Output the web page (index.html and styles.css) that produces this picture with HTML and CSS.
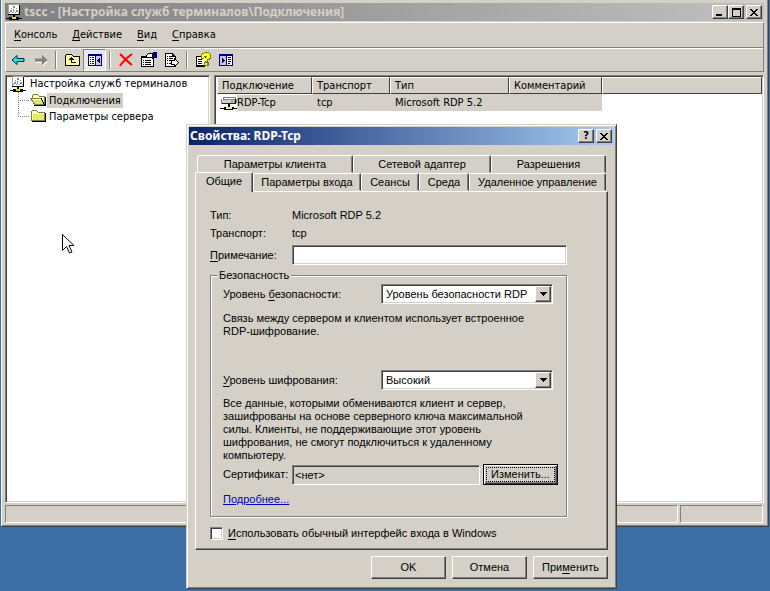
FILE: index.html
```html
<!DOCTYPE html>
<html lang="ru">
<head>
<meta charset="utf-8">
<title>tscc - [Настройка служб терминалов\Подключения]</title>
<link rel="stylesheet" href="styles.css">
</head>
<body>
<svg class="defs" aria-hidden="true">
  <symbol id="i-console" viewBox="0 0 16 16" shape-rendering="crispEdges">
    <path fill="#a0a0a0" d="M2 0h12v11H2z"/><path fill="#fff" d="M3 1h10v9H3z"/>
    <path fill="#000" d="M13 1h1v10H2v-1h11zM7 11h2v2H7zM0 14h3v-1h10v1h3v1h-3v1H3v-1H0z"/>
    <path fill="#8a8a8a" d="M7 2h2v2H7zM5 4h1v1H5zM10 4h1v1h-1zM4 6h2v2H4zM7 5h1v3H7zM10 6h2v2h-2zM3 8h1v1H3zM6 8h1v1H6zM9 8h1v1H9zM12 8h1v1h-1z"/>
    <path fill="#e6e300" d="M6 13h4v2H6z"/>
  </symbol>
  <symbol id="i-folder" viewBox="0 0 16 16" shape-rendering="crispEdges">
    <path fill="#808040" d="M1 3h1V2h5v1h1v1h7v9H1z"/><path fill="#ffffb0" d="M2 3h5v1h1v1h6v1H2z"/>
    <path fill="#e9e76a" d="M2 6h12v6H2z"/><path fill="#fffd9a" d="M2 6h1v6H2z"/><path fill="#000" d="M15 5h1v9H2v-1h13z"/>
  </symbol>
  <symbol id="i-open" viewBox="0 0 16 16" shape-rendering="crispEdges">
    <path fill="#808040" d="M2 3h1V2h5v1h1v1h6v9H4L0 6h2z"/><path fill="#ffffb0" d="M3 3h5v1h1v1h5v1H3z"/>
    <path fill="#e4e268" d="M2 7h9l3 5H5z"/><path fill="#fff" d="M2 7h9v1H3zM12 6h2v4h-1z"/><path fill="#000" d="M15 5h1v9H4v-1h11zM11 6h1v2h1v2h1v2h1v1h-1v-1h-1v-2h-1V8h-1z"/>
  </symbol>
  <symbol id="i-rdp" viewBox="0 0 17 16" shape-rendering="crispEdges">
    <path fill="#808080" d="M3 2h13v2h1v4h-1v1H1V4h2z"/><path fill="#fff" d="M4 3h11v1H3v1H2v-1h2z"/>
    <path fill="#d4d0c8" d="M2 5h12v3H2z"/><path fill="#222" d="M15 4h1v5H2V8h13z"/><path fill="#00d000" d="M11 6h2v1h-2z"/>
    <path fill="#000" d="M8 9h2v3h4v1h3v1h-4v1H4v-1H0v-1h4v-1h4z"/><path fill="#e6e6a0" d="M6 12h6v2H6z"/>
  </symbol>
  <symbol id="i-back" viewBox="0 0 14 14"><path fill="#23e2e2" stroke="#002f3b" d="M1 7l5-4.500v3h7v3H6v3z"/></symbol>
  <symbol id="i-fwd" viewBox="0 0 14 14"><path fill="#fff" d="M14 8l-5 5v-3H2V9z"/><path fill="#808080" d="M13.500 7L8 2v3.500H1v3h7V12z"/></symbol>
  <symbol id="i-up" viewBox="0 0 16 16" shape-rendering="crispEdges">
    <path fill="#000" d="M1 3h1V2h6v1h1v1h7v10H1z"/><path fill="#ffff9c" d="M2 3h6v1h1v1h6v8H2z"/>
    <path fill="#000" d="M7 5h1v1h1v1h1v1H8v2h4v1H7V8H5V7h1V6h1z"/>
  </symbol>
  <symbol id="i-tree" viewBox="0 0 14 14" shape-rendering="crispEdges">
    <path fill="#000080" d="M0 1h14v12H0z"/><path fill="#fff" d="M1 3h6v9H1zM8 3h5v9H8z"/>
    <path fill="#000080" d="M2 4h1v1H2zM4 4h2v1H4zM2 6h1v1H2zM4 6h2v1H4zM2 8h1v1H2zM4 8h2v1H4zM2 10h1v1H2zM4 10h2v1H4z"/><path fill="#c6c3ff" d="M8 3h5v9H8z"/>
    <path fill="#000" d="M11 5h1v5h-1V9h-1V8H9V7h1V6h1z"/>
  </symbol>
  <symbol id="i-pane" viewBox="0 0 14 14" shape-rendering="crispEdges">
    <path fill="#000080" d="M0 1h14v12H0z"/><path fill="#c6c3ff" d="M1 3h6v9H1z"/><path fill="#fff" d="M8 3h5v9H8z"/>
    <path fill="#000080" d="M9 4h3v1H9zM9 6h3v1H9zM9 8h3v1H9zM9 10h2v1H9z"/><path fill="#000" d="M3 5h1v1h1v1h1v1H5v1H4v1H3z"/>
  </symbol>
  <symbol id="i-del" viewBox="0 0 14 14"><path fill="none" stroke="#f00" stroke-width="2" d="M1 1c3 3 8 8 12 11M13 1C9 4 4 8 1 13"/></symbol>
  <symbol id="i-prop" viewBox="0 0 16 16" shape-rendering="crispEdges">
    <path fill="#000" d="M0 4h13v11H0z"/><path fill="#fff" d="M1 6h11v8H1z"/>
    <path fill="#000" d="M2 8h1v1H2zM4 8h6v1H4zM2 10h1v1H2zM4 10h6v1H4zM2 12h1v1H2zM4 12h6v1H4z"/>
    <path fill="#000" d="M4 4l3-3h6v6h-2L9 5 7 6H5z"/><path fill="#fff" d="M5 4l3-2h3v3H8L6 5z"/><path fill="#000080" d="M12 0h4v6h-3z"/>
  </symbol>
  <symbol id="i-export" viewBox="0 0 16 16" shape-rendering="crispEdges">
    <path fill="#000" d="M1 1h8v1h1v1h1v1h1v11H1z"/><path fill="#fff" d="M2 2h6v3h3v9H2z"/>
    <path fill="#000" d="M3 4h1v1H3zM5 4h3v1H5zM3 6h1v1H3zM5 6h4v1H5zM3 8h1v1H3zM5 8h3v1H5zM3 11h1v1H3zM5 11h3v1H5z"/>
    <path fill="#000" d="M7 8h3V6h1v1h1v1h1v1h1v1h1v1h-1v1h-1v1h-1v1h-1v1h-1v-2H7z"/><path fill="#fff" d="M8 9h3V8h1v1h1v1h1v1h-1v1h-1v1h-1v-1H8z"/>
  </symbol>
  <symbol id="i-help" viewBox="0 0 16 16" shape-rendering="crispEdges">
    <path fill="#000" d="M1 4h10v9h-1v2H1z"/><path fill="#fff" d="M2 5h8v8H2z"/>
    <path fill="#000" d="M3 7h4v1H3zM3 9h4v1H3zM3 11h4v1H3z"/>
    <path fill="#808000" d="M6 2h1V1h2V0h5v1h1v1h1v5h-1v1h-2v2h1v4h-5v-4h1V6h3V5H9v2H6z"/>
    <path fill="#ffff21" d="M7 2h2V1h5v1h1v4h-1v1h-2v2h-2V6h2V4H9v2H7zM10 11h2v2h-2z"/>
  </symbol>
  <symbol id="i-arrow" viewBox="0 0 7 4" shape-rendering="crispEdges"><path d="M0 0h7v1H6v1H5v1H4v1H3V3H2V2H1V1H0z"/></symbol>
  <symbol id="i-close" viewBox="0 0 8 7" shape-rendering="crispEdges"><path d="M0 0h2v1h1v1h2V1h1V0h2v1H7v1H6v1H5v1h1v1h1v1h1v1H6V6H5V5H3v1H2v1H0V6h1V5h1V4h1V3H2V2H1V1H0z"/></symbol>
</svg>

<div class="desktop">
  <main class="window">
    <header class="title inactive">
      <svg class="ico"><use href="#i-console"/></svg>
      <h1>tscc - [Настройка служб терминалов\Подключения]</h1>
      <span class="caption">
        <button aria-label="Свернуть"><svg width="8" height="7" shape-rendering="crispEdges"><path d="M0 5h6v2H0z"/></svg></button><button aria-label="Развернуть"><svg width="9" height="9" shape-rendering="crispEdges"><path fill-rule="evenodd" d="M0 0h9v9H0zM1 2v6h7V2z"/></svg></button>
        <button class="apart" aria-label="Закрыть"><svg width="8" height="7"><use href="#i-close"/></svg></button>
      </span>
    </header>
    <div class="bands">
      <nav class="menu">
        <button><u>К</u>онсоль</button><button><u>Д</u>ействие</button><button><u>В</u>ид</button><button><u>С</u>правка</button>
      </nav>
      <div class="tools" role="toolbar" aria-label="Инструменты">
        <button aria-label="Назад"><svg width="14" height="14"><use href="#i-back"/></svg></button>
        <button aria-label="Вперед"><svg width="14" height="14"><use href="#i-fwd"/></svg></button>
        <i></i>
        <button aria-label="Вверх"><svg class="ico"><use href="#i-up"/></svg></button>
        <button class="pressed" aria-label="Дерево консоли"><svg width="14" height="14"><use href="#i-tree"/></svg></button>
        <i></i>
        <button aria-label="Удалить"><svg width="14" height="14"><use href="#i-del"/></svg></button>
        <button aria-label="Свойства"><svg class="ico"><use href="#i-prop"/></svg></button>
        <button aria-label="Экспорт списка"><svg class="ico"><use href="#i-export"/></svg></button>
        <i></i>
        <button aria-label="Справка"><svg class="ico"><use href="#i-help"/></svg></button>
        <button aria-label="Панель действий"><svg width="14" height="14"><use href="#i-pane"/></svg></button>
      </div>
    </div>
    <div class="panes">
      <div class="tree">
        <div class="node"><svg class="ico"><use href="#i-console"/></svg><span>Настройка служб терминалов</span></div>
        <ul>
          <li class="node"><svg class="ico"><use href="#i-open"/></svg><span class="picked">Подключения</span></li>
          <li class="node"><svg class="ico"><use href="#i-folder"/></svg><span>Параметры сервера</span></li>
        </ul>
      </div>
      <div class="list">
        <table>
          <colgroup><col class="c1"><col class="c2"><col class="c3"><col class="c4"><col></colgroup>
          <thead><tr><th>Подключение</th><th>Транспорт</th><th>Тип</th><th>Комментарий</th><th></th></tr></thead>
          <tbody><tr><td><span class="name"><svg width="17" height="16"><use href="#i-rdp"/></svg><span>RDP-Tcp</span></span></td><td>tcp</td><td>Microsoft RDP 5.2</td><td></td><td></td></tr></tbody>
        </table>
      </div>
    </div>
    <footer class="status"><span></span><span></span></footer>
  </main>
</div>

<svg class="cursor" width="13" height="21" viewBox="0 0 13 21" aria-hidden="true"><path fill="#fff" stroke="#000" d="M.5 1.500v16l4-4 3 6.500 2.500-1-3-6.500h5z"/></svg>

<section class="dialog" role="dialog" aria-labelledby="dlg-title">
  <header class="title">
    <h2 id="dlg-title">Свойства: RDP-Tcp</h2>
    <span class="caption">
      <button aria-label="Справка">?</button>
      <button class="apart" aria-label="Закрыть"><svg width="8" height="7"><use href="#i-close"/></svg></button>
    </span>
  </header>
  <div class="sheet">
    <div class="tabs back" role="tablist">
      <button role="tab">Параметры клиента</button><button role="tab">Сетевой адаптер</button><button role="tab">Разрешения</button>
    </div>
    <div class="tabs front" role="tablist">
      <button role="tab" class="active" aria-selected="true">Общие</button><button role="tab">Параметры входа</button><button role="tab">Сеансы</button><button role="tab">Среда</button><button role="tab">Удаленное управление</button>
    </div>
    <form class="panel">
      <div class="row info"><span>Тип:</span><span>Microsoft RDP 5.2</span></div>
      <div class="row info"><span>Транспорт:</span><span>tcp</span></div>
      <div class="row note"><label for="note"><u>П</u>римечание:</label><input class="field" id="note" type="text"></div>
      <fieldset>
        <legend>Безопасность</legend>
        <div class="row pick"><label for="sec">Уровень <u>б</u>езопасности:</label><span class="combo"><select class="field" id="sec"><option>Уровень безопасности RDP</option></select><span class="drop"><svg width="7" height="4"><use href="#i-arrow"/></svg></span></span></div>
        <p class="about">Связь между сервером и клиентом использует встроенное RDP-шифрование.</p>
        <div class="row pick"><label for="enc"><u>У</u>ровень шифрования:</label><span class="combo"><select class="field" id="enc"><option>Высокий</option></select><span class="drop"><svg width="7" height="4"><use href="#i-arrow"/></svg></span></span></div>
        <p class="detail">Все данные, которыми обмениваются клиент и сервер, зашифрованы на основе серверного ключа максимальной силы. Клиенты, не поддерживающие этот уровень шифрования, не смогут подключиться к удаленному компьютеру.</p>
        <div class="row cert"><label for="cert">Сертификат:</label><input class="field" id="cert" type="text" value="&lt;нет&gt;" readonly><button type="button" class="push default"><span>Изменить...</span></button></div>
        <a href="#more">Подробнее...</a>
      </fieldset>
      <label class="check"><input type="checkbox"><span><u>И</u>спользовать обычный интерфейс входа в Windows</span></label>
    </form>
    <div class="actions">
      <button class="push">OK</button><button class="push">Отмена</button><button class="push">При<u>м</u>енить</button>
    </div>
  </div>
</section>
</body>
</html>
```
FILE: styles.css
```css
:root {
  --face: #d4d0c8;
  --light: #fff;
  --shade: #808080;
  --dark: #404040;
  --tahoma: "DejaVu Sans Condensed", "DejaVu Sans", sans-serif;
}
* { box-sizing: border-box; }
body {
  margin: 0;
  background: #3a6ea5;
  color: #000;
  font: 11px/16px var(--tahoma);
}
button, input, select { font: inherit; color: inherit; margin: 0; padding: 0; border: 0; border-radius: 0; }
button { background: var(--face); }
h1, h2 { margin: 0; font: bold 12px/18px "Noto Sans", "Open Sans", sans-serif; flex: 1; white-space: nowrap; }
svg { display: block; flex: none; }
u { text-underline-offset: 2px; }
.defs { position: absolute; width: 0; height: 0; }
.ico { width: 16px; height: 16px; }

.desktop { display: grid; height: 100vh; padding: 0 1px 64px; }
.window {
  display: flex;
  flex-direction: column;
  min-height: 0;
  padding: 3px 4px;
  background: var(--face);
  border: solid var(--dark);
  border-width: 0 1px 1px 0;
  box-shadow: inset 1px 0 var(--light), inset -1px -1px var(--shade);
}

.title {
  display: flex;
  align-items: center;
  height: 18px;
  padding: 0 2px 0 1px;
  color: #fff;
  background: linear-gradient(to right, #0a246a, #a6caf0);
}
.title.inactive { gap: 2px; color: var(--face); background: linear-gradient(to right, #808080, #c0c0c0); }
.caption { display: flex; }
.caption button {
  display: grid;
  place-items: center;
  width: 16px;
  height: 14px;
  font-weight: bold;
  line-height: 12px;
  color: #000;
  border: 1px solid;
  border-color: var(--light) var(--dark) var(--dark) var(--light);
  box-shadow: inset -1px -1px var(--shade);
}
.caption .apart { margin-left: 2px; }

.bands { margin-top: 1px; border: 1px solid; border-color: var(--light) var(--shade) var(--shade) var(--light); }
.menu { display: flex; height: 25px; border-bottom: 1px solid var(--shade); padding-left: 2px; }
.menu button { padding: 0 6px; margin-right: 3px; }
.tools { display: flex; align-items: center; height: 23px; border-top: 1px solid var(--light); }
.tools button { display: grid; place-items: center; width: 23px; height: 22px; }
.tools i { width: 2px; height: 18px; margin: 0 3px; border-left: 1px solid var(--shade); background: var(--light); }
.tools .pressed { background: #eae8e4; border: 1px solid; border-color: var(--shade) var(--light) var(--light) var(--shade); }

.panes { display: grid; grid-template-columns: 205px 1fr; gap: 4px; flex: 1; min-height: 0; margin-top: 3px; }
.tree, .list {
  background: #fff;
  border: 1px solid;
  border-color: var(--shade) var(--light) var(--light) var(--shade);
  box-shadow: inset 1px 1px var(--dark), inset -1px -1px var(--face);
}
.tree { padding: 0 4px; }
.tree ul { margin: 0 0 0 8px; padding: 0; list-style: none; }
.node { display: flex; align-items: center; gap: 4px; height: 16px; white-space: nowrap; }
.tree li { gap: 1px; }
.tree li::before {
  content: "";
  width: 11px;
  height: 16px;
  background:
    repeating-linear-gradient(to bottom, var(--shade) 0 1px, transparent 1px 2px) 0 0 / 1px 9px no-repeat,
    repeating-linear-gradient(to right, var(--shade) 0 1px, transparent 1px 2px) 0 8px / 11px 1px no-repeat;
}
.tree li:not(:last-child)::before {
  background-size: 1px 16px, 11px 1px;
}
.tree li span { padding: 0 2px; line-height: 15px; }
.picked { background: var(--face); }

.list { padding: 1px 1px 1px 2px; }
table { width: 100%; table-layout: fixed; border-collapse: separate; border-spacing: 0; }
.c1 { width: 95px; } .c2 { width: 78px; } .c3 { width: 119px; } .c4 { width: 93px; }
th, td { height: 17px; padding: 0 4px; text-align: left; font-weight: normal; line-height: 15px; white-space: nowrap; }
th { background: var(--face); border: 1px solid; border-color: var(--light) var(--dark) var(--dark) var(--light); }
td { background: var(--face); padding: 0 5px; line-height: 16px; }
td:first-child { padding: 0 0 0 3px; background: #fff; }
td:last-child { background: #fff; }
.name { display: flex; }
.name span { flex: 1; background: var(--face); }

.status { display: grid; grid-template-columns: 1fr 83px; gap: 2px; height: 18px; margin-top: 2px; padding-right: 1px; }
.status span { border: 1px solid; border-color: var(--shade) var(--light) var(--light) var(--shade); }

.cursor { position: absolute; left: 62px; top: 233px; }

.dialog {
  position: absolute;
  left: 186px;
  top: 124px;
  width: 431px;
  padding: 2px;
  background: var(--face);
  border: 1px solid;
  border-color: var(--face) var(--dark) var(--dark) var(--face);
  box-shadow: inset 1px 1px var(--light), inset -1px -1px var(--shade);
}
.sheet { padding: 10px 6px 7px; font: 11px/13px "Liberation Sans", Arial, sans-serif; }
.tabs { display: grid; }
.tabs button {
  height: 18px;
  border: 1px solid;
  border-color: var(--light) var(--dark) transparent var(--light);
  border-radius: 2px 2px 0 0;
  box-shadow: inset -1px 0 var(--shade);
  white-space: nowrap;
}
.back { grid-template-columns: 156fr 138fr 115fr; margin: 0 2px; }
.front { grid-template-columns: 58fr 108fr 58fr 50fr 137fr; align-items: end; margin-right: 2px; }
.front .active { height: 20px; margin: -1px 0 -1px; z-index: 1; border-bottom: 0; padding-bottom: 2px; }
.panel {
  padding: 14px 40px 8px 14px;
  border: 1px solid;
  border-color: var(--light) var(--dark) var(--dark) var(--light);
  box-shadow: inset -1px -1px var(--shade);
}
.row { display: flex; align-items: center; }
.info { height: 18px; }
.info span:first-child, .note label { width: 82px; }
.field {
  height: 20px;
  min-width: 0;
  padding: 0 2px;
  background: #fff;
  border: 1px solid;
  border-color: var(--shade) var(--light) var(--light) var(--shade);
  box-shadow: inset 1px 1px var(--dark), inset -1px -1px var(--face);
}
.note { margin-top: 3px; }
.note .field { flex: 1; }
fieldset {
  min-width: 0;
  margin: 4px 0 0;
  padding: 2px 8px 10px 12px;
  border: 1px solid var(--shade);
  box-shadow: 1px 1px var(--light), inset 1px 1px var(--light);
}
legend { margin-left: -6px; padding: 0 2px; background: var(--face); }
.pick { justify-content: space-between; padding-right: 5px; }
.combo { position: relative; width: 172px; }
.combo select { display: block; width: 100%; appearance: none; padding-left: 4px; }
.drop {
  position: absolute;
  top: 2px;
  right: 2px;
  bottom: 2px;
  width: 16px;
  display: grid;
  place-items: center;
  pointer-events: none;
  background: var(--face);
  border: 1px solid;
  border-color: var(--light) var(--dark) var(--dark) var(--light);
  box-shadow: inset -1px -1px var(--shade);
}
p { margin: 0 20px 0 0; }
.about { padding: 8px 0 32px; }
.detail { padding: 7px 0 2px; }
.cert label { width: 69px; }
.cert .field { flex: 1; margin-right: 3px; background: var(--face); }
a { display: inline-block; margin-top: 8px; color: #0000c0; }
.push {
  width: 75px;
  height: 23px;
  border: 1px solid;
  border-color: var(--light) var(--dark) var(--dark) var(--light);
  box-shadow: inset -1px -1px var(--shade);
}
.default { height: 21px; padding: 2px; border-color: #000; box-shadow: inset 1px 1px var(--light), inset -1px -1px var(--dark), inset -2px -2px var(--shade); }
.default span { display: block; border: 1px dotted #000; line-height: 13px; }
.check { display: flex; align-items: center; gap: 5px; margin-top: 9px; height: 15px; }
.check input {
  appearance: none;
  width: 13px;
  height: 13px;
  background: #fff;
  border: 1px solid;
  border-color: var(--shade) var(--light) var(--light) var(--shade);
  box-shadow: inset 1px 1px var(--dark), inset -1px -1px var(--face);
}
.actions { display: flex; justify-content: flex-end; gap: 6px; margin-top: 6px; }
```
